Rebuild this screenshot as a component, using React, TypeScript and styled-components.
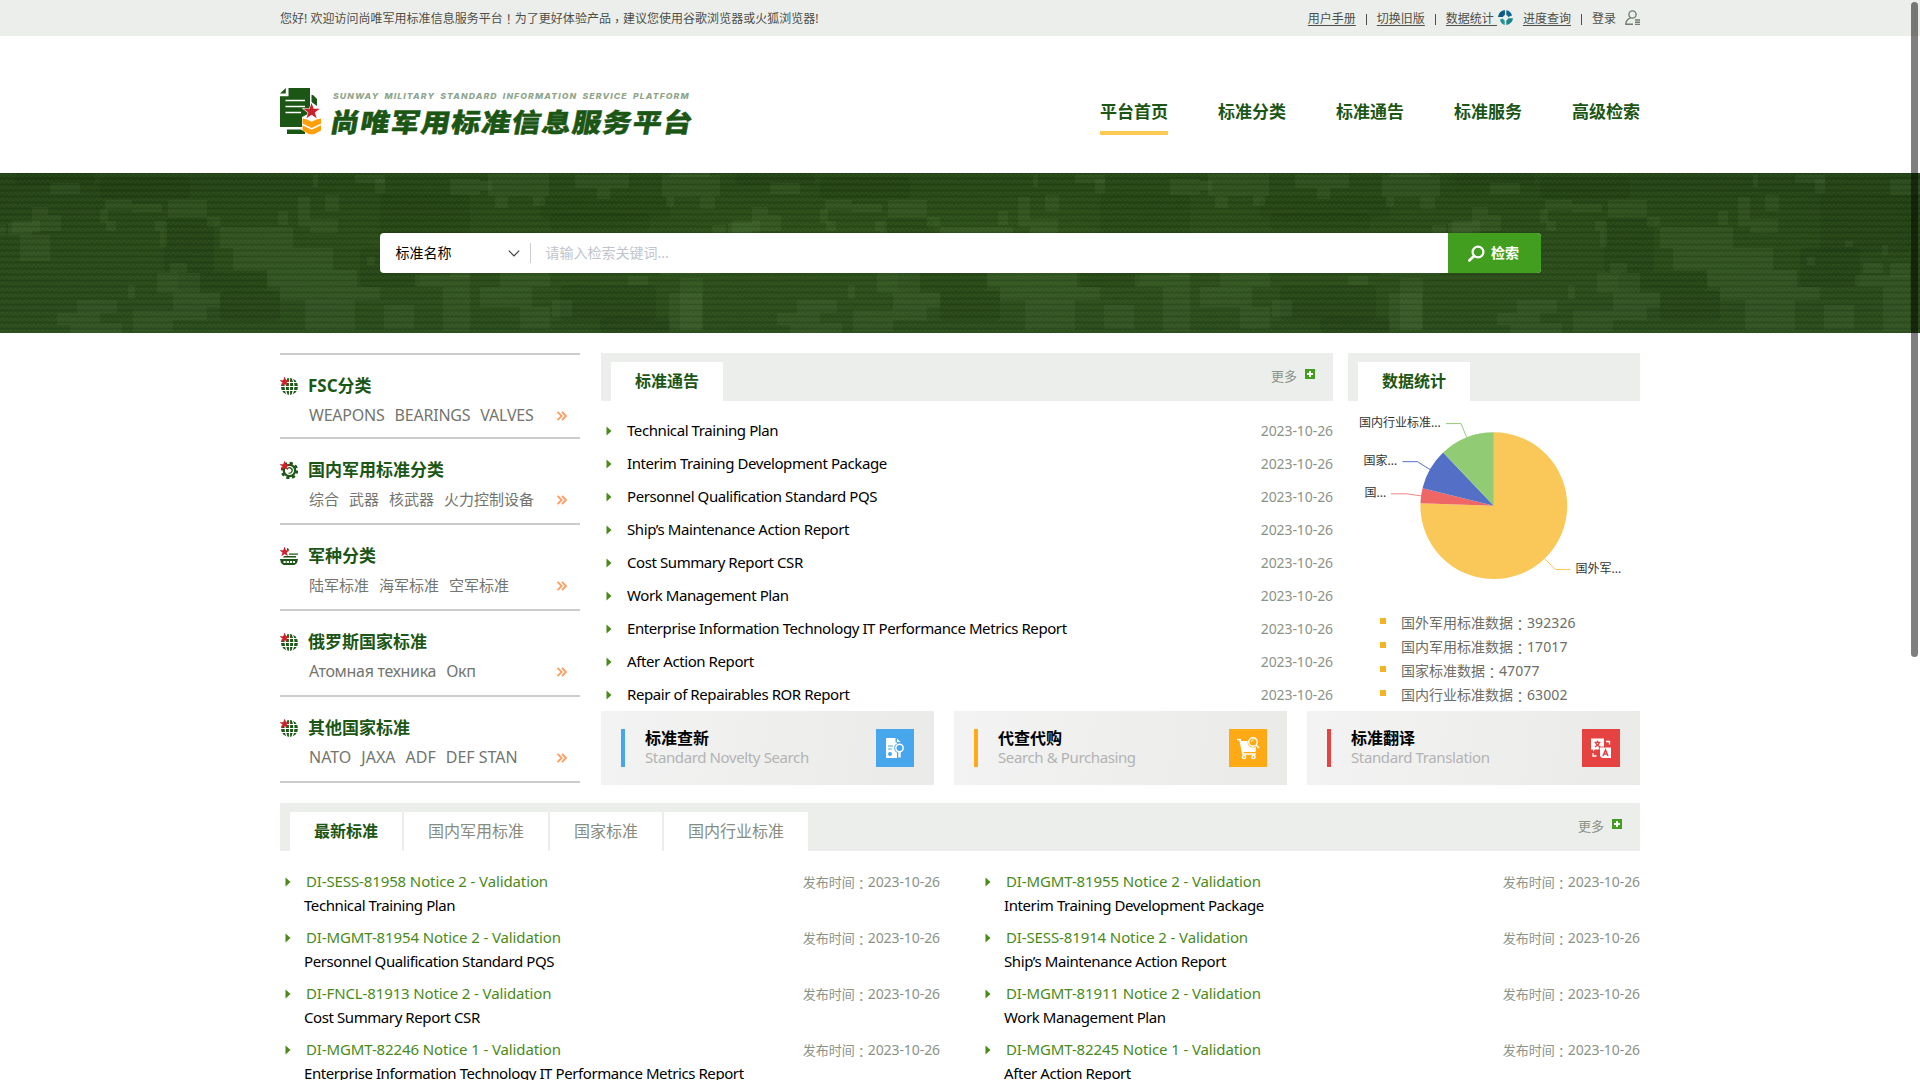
import React from "react";
import styled, { createGlobalStyle, css } from "styled-components";

const GlobalStyle = createGlobalStyle`
  * { box-sizing: border-box; }
  html, body { margin: 0; padding: 0; background: #fff; }
  body {
    font-family: "Noto Sans", "Noto Sans CJK SC", sans-serif;
    font-size: 14px;
    color: #000;
  }
  a { color: inherit; text-decoration: none; }
  ul { list-style: none; margin: 0; padding: 0; }
`;

const green = "#1b5615";
const panelGrey = "#eceeeb";

const Page = styled.div`
  width: 100%;
  height: 1080px;
  overflow: hidden;
  position: relative;
`;

const Container = styled.div`
  width: 1360px;
  margin: 0 auto;
`;

const Punct = styled.span<{ $drop?: number }>`
  display: inline-block;
  font-family: "Noto Sans CJK TC", sans-serif;
  line-height: 1;
  transform: translateY(${(p) => p.$drop ?? 1}px);
`;

/* ---------- top bar ---------- */

const TopBar = styled.div`
  height: 36px;
  background: ${panelGrey};
  color: #4c4e48;
  font-size: 12px;
`;

const TopInner = styled(Container)`
  height: 36px;
  display: flex;
  align-items: center;
  justify-content: space-between;
  line-height: 18px;
  padding-top: 2px;
`;

const Greeting = styled.span`
  white-space: nowrap;
  letter-spacing: 0.02px;
`;

const TopLinks = styled.div`
  display: flex;
  align-items: center;
`;

const TopLink = styled.a<{ $plain?: boolean }>`
  display: inline-flex;
  text-decoration: ${(p) => (p.$plain ? "none" : "underline")};
  text-underline-offset: 2px;
  white-space: pre;
`;

const Divider = styled.i`
  width: 1px;
  height: 11px;
  background: #4c4e48;
  margin: 0 10px;
`;

/* ---------- header ---------- */

const Header = styled(Container)`
  height: 137px;
  display: flex;
  justify-content: space-between;
`;

const Brand = styled.div`
  display: flex;
  padding-top: 52px;
`;

const BrandText = styled.div`
  margin-left: 9px;
  padding-top: 1px;
`;

const BrandEn = styled.div`
  font: italic 800 8px/14px Inter, sans-serif;
  color: #8ea58b;
  letter-spacing: 1.02px;
  word-spacing: 2px;
  white-space: nowrap;
  transform: scaleX(1.083);
  transform-origin: 0 0;
  margin-left: 2px;
`;

const BrandCn = styled.div`
  font: 900 29px/32px "Noto Sans CJK SC", sans-serif;
  letter-spacing: 1.25px;
  color: ${green};
  transform: skewX(-10deg) scaleY(0.9);
  white-space: nowrap;
  margin-top: 1px;
  -webkit-text-stroke: 0.5px ${green};
`;

const Nav = styled.nav`
  display: flex;
  gap: 50px;
  padding-top: 60px;
`;

const NavItem = styled.a<{ $active?: boolean }>`
  height: 39px;
  font-size: 17px;
  font-weight: 700;
  line-height: 31px;
  color: ${green};
  border-bottom: 4px solid ${(p) => (p.$active ? "#ffca52" : "transparent")};
`;

/* ---------- search banner ---------- */

const Banner = styled.div`
  height: 160px;
  position: relative;
  display: flex;
  align-items: center;
  justify-content: center;
`;

const Camo = styled.svg`
  position: absolute;
  inset: 0;
  width: 100%;
  height: 100%;
`;

const SearchBox = styled.div`
  position: relative;
  width: 1161px;
  height: 40px;
  display: flex;
  align-items: center;
  background: #fff;
  border-radius: 4px;
  overflow: hidden;
  line-height: 20px;
`;

const SearchType = styled.div`
  width: 151px;
  height: 20px;
  padding: 0 10px 0 16px;
  display: flex;
  align-items: center;
  justify-content: space-between;
  border-right: 1px solid #c9ccd0;
`;

const Placeholder = styled.span`
  flex: 1;
  padding-left: 15px;
  color: #c0c4cc;
`;

const SearchButton = styled.button`
  width: 93px;
  height: 40px;
  border: 0;
  padding: 0 1px 0 0;
  display: flex;
  align-items: center;
  justify-content: center;
  gap: 6px;
  color: #fff;
  background: #419e1e;
  font: 700 14px/20px "Noto Sans", "Noto Sans CJK SC", sans-serif;
`;

/* ---------- main area ---------- */

const Main = styled(Container)`
  display: flex;
  gap: 21px;
  padding-top: 20px;
`;

const Sidebar = styled.ul`
  width: 300px;
  border-top: 2px solid #cbcbcb;
`;

const Category = styled.li<{ $short?: boolean }>`
  height: ${(p) => (p.$short ? 84 : 86)}px;
  border-bottom: 2px solid #cbcbcb;
  padding-top: 18px;
`;

const CategoryTitle = styled.div`
  display: flex;
  align-items: center;
  gap: 10px;
  height: 26px;
  font-size: 17px;
  font-weight: 700;
  line-height: 26px;
  color: ${green};
  svg { margin-top: -1px; }
`;

const CategoryLinks = styled.div`
  display: flex;
  align-items: center;
  height: 24px;
  margin-top: 4px;
  padding: 0 13px 0 29px;
  line-height: 24px;
  color: #73756e;
  white-space: nowrap;
  svg { margin: 2px 0 0 auto; }
`;

const SubLink = styled.a<{ $size: number; $tight: number }>`
  margin-right: 10px;
  font-size: ${(p) => p.$size}px;
  letter-spacing: ${(p) => p.$tight}px;
`;

const Right = styled.div`
  flex: 1;
`;

const Panels = styled.div`
  display: flex;
  gap: 15px;
  height: 358px;
`;

const Panel = styled.section<{ $w: number }>`
  width: ${(p) => p.$w}px;
`;

const PanelHead = styled.div`
  height: 48px;
  padding: 9px 0 0 10px;
  background: ${panelGrey};
  display: flex;
  gap: 2px;
`;

const Tab = styled.div<{ $active?: boolean }>`
  height: 39px;
  padding: 0 24px;
  background: #fff;
  font-size: 16px;
  line-height: 39px;
  color: #858d82;
  ${(p) =>
    p.$active &&
    css`
      color: ${green};
      font-weight: 700;
    `}
`;

const More = styled.a<{ $right: number }>`
  display: flex;
  gap: 8px;
  margin-left: auto;
  padding-right: ${(p) => p.$right}px;
  height: 28px;
  font-size: 13px;
  line-height: 28px;
  color: #8b9387;
  svg { margin-top: 7px; }
`;

const NoticeList = styled.ul`
  padding-top: 14px;
`;

const Notice = styled.li`
  height: 33px;
  display: flex;
  align-items: center;
  padding-left: 5px;
  line-height: 20px;
  svg { margin: -1px 15px 0 0; }
`;

const NoticeTitle = styled.span`
  flex: 1;
  font-size: 15px;
  letter-spacing: -0.416px;
  margin-top: -4px;
`;

const DateText = styled.span<{ $lift: number }>`
  display: flex;
  align-items: center;
  font-size: 13px;
  line-height: 20px;
  color: #8b9387;
  margin-top: -${(p) => p.$lift}px;
`;

const DateValue = styled.span`
  font-size: 14px;
  letter-spacing: -0.08px;
`;

const Chart = styled.svg`
  display: block;
  width: 292px;
  height: 210px;
  font: 12px "Noto Sans", "Noto Sans CJK SC", sans-serif;
  fill: #333;
`;

const Legend = styled.ul`
  padding-left: 32px;
`;

const LegendItem = styled.li`
  height: 24px;
  display: flex;
  align-items: center;
  line-height: 20px;
  color: #6c6e67;
  &::before {
    content: "";
    width: 6px;
    height: 6px;
    margin: -4px 15px 0 0;
    background: #f6b424;
  }
`;

const LegendValue = styled.span`
  letter-spacing: 0.1px;
`;

const Services = styled.div`
  display: flex;
  gap: 20px;
`;

const Service = styled.a`
  width: 333px;
  height: 74px;
  padding: 0 20px;
  display: flex;
  align-items: center;
  background: linear-gradient(100deg, #f3f3f3, #eaeae8);
`;

const ServiceBar = styled.i<{ $c: string }>`
  width: 4px;
  height: 38px;
  background: ${(p) => p.$c};
`;

const ServiceText = styled.div`
  flex: 1;
  margin: -1px 0 0 20px;
`;

const ServiceTitle = styled.div`
  font-size: 16px;
  font-weight: 700;
  line-height: 20px;
`;

const ServiceSub = styled.div`
  font-size: 15px;
  line-height: 19px;
  letter-spacing: -0.38px;
  color: #b3b3b3;
`;

const ServiceIcon = styled.div<{ $c: string }>`
  width: 38px;
  height: 38px;
  background: ${(p) => p.$c};
`;

/* ---------- latest standards ---------- */

const Latest = styled(Container)`
  padding-top: 18px;
`;

const StandardGrid = styled.ul`
  display: grid;
  grid-template-columns: 660px 660px;
  column-gap: 40px;
  padding-top: 19px;
`;

const Standard = styled.li`
  height: 56px;
  padding-left: 5px;
`;

const StandardTop = styled.div`
  display: flex;
  align-items: center;
  height: 24px;
  svg { margin-right: 15px; }
`;

const Code = styled.span`
  flex: 1;
  font-size: 15px;
  letter-spacing: -0.12px;
  color: #4a8a19;
  line-height: 24px;
  margin-top: -3px;
`;

const StandardName = styled.div`
  padding-left: 19px;
  font-size: 15px;
  letter-spacing: -0.416px;
  line-height: 23px;
`;

const ScrollThumb = styled.div`
  position: absolute;
  right: 2px;
  top: 2px;
  width: 7px;
  height: 655px;
  border-radius: 4px;
  background: rgba(0, 0, 0, 0.5);
`;

/* ---------- drawings ---------- */

const STAR = "M0-5 1.2-1.6 4.8-1.6 1.9.6 3 4 0 1.9-3 4-1.9.6-4.8-1.6-1.2-1.6Z";

const LogoMark = () => (
  <svg width="42" height="47" viewBox="0 0 42 47">
    <path fill={green} d="M8.500 0H30V25L22 29V39H0V8.200H8.500ZM0 5.500 5.800 0V5.500ZM31.500 7 33 7 37 11V18L31.500 14ZM7 41.500H21L25 44V46H7Z" />
    <path stroke="#fff" strokeWidth="1.700" d="M5.500 12.500H25M5.500 18.500H25M5.500 24.500H21" fill="none" />
    <path d={STAR} transform="translate(31.600 23.500) scale(2.050)" fill="#fff" />
    <path d={STAR} transform="translate(31.600 23.500) scale(1.700)" fill="#c8232c" />
    <path
      fill="#ff9f0a"
      d="M22.500 30.500 27 31.500 31.600 33.800 36.200 31.500 41 30.500V35.500L31.600 40 22.500 35.500ZM22.500 37.300 31.600 41.700 41 37.300V42.500L34 46.300H29.200L22.500 42.500Z"
    />
  </svg>
);

const StatIcon = () => (
  <svg width="15" height="15" viewBox="0 0 15 15" style={{ marginLeft: 1, marginRight: 10, marginTop: -3 }}>
    <path d="M6.900 0V5A3 3 0 0 0 5 7.100H0A7.500 7.500 0 0 1 6.900 0Z" fill="#0c5a86" />
    <path d="M8.300 .2A7 7 0 0 1 14 5.500L10.200 6.900A3 3 0 0 0 8.300 5Z" fill="#0f6690" />
    <path d="M15 8.200A7.500 7.500 0 0 1 8.300 15V10.400A3 3 0 0 0 10.200 8.200Z" fill="#19868c" />
    <path d="M2 9.400 5 8.400A3 3 0 0 0 6.700 10.400V15A7 7 0 0 1 2 9.400Z" fill="#22959a" />
  </svg>
);

const UserIcon = () => (
  <svg width="15" height="16" viewBox="0 0 15 16" fill="none" stroke="#6f7f70" strokeWidth="1.400" style={{ marginLeft: 9, marginTop: -3 }}>
    <circle cx="7.500" cy="4.500" r="3.600" />
    <path d="M5.500 7.800C2.500 9 .8 11 .8 14.300H8M10 10H15M10 12.200H15M10 14.400H15" />
  </svg>
);

const Bullet = () => (
  <svg width="6" height="10" viewBox="0 0 6 10">
    <path d="M.5.500 5.500 5 .5 9.500Z" fill="#4a8a19" />
  </svg>
);

const PlusIcon = () => (
  <svg width="10" height="10" viewBox="0 0 10 10">
    <path fill="#419e1e" d="M0 0H10V10H0Z" />
    <path stroke="#fff" strokeWidth="2" d="M5 2V8M2 5H8" />
  </svg>
);

const DoubleArrow = () => (
  <svg width="10" height="10" viewBox="0 0 10 10" fill="none" stroke="#ff9d63" strokeWidth="1.900">
    <path d="M.6.800 4.600 5 .6 9.200M5 .8 9 5 5 9.200" />
  </svg>
);

const GlobeIcon = () => (
  <svg width="18" height="18" viewBox="0 0 18 18">
    <circle cx="9.500" cy="9.500" r="8.500" fill={green} />
    <path stroke="#fff" strokeWidth="1.200" fill="none" d="M0 5.500H18M0 9.500H18M0 13.500H18M9.500 0V18M7 0C4.500 6 4.500 12 7 18M12 0C14.500 6 14.500 12 12 18" />
    <path d={STAR} transform="translate(4.600 4.900) scale(1.100)" fill="#d0202a" />
  </svg>
);

const GearIcon = () => (
  <svg width="18" height="18" viewBox="0 0 18 18">
    <circle cx="9.500" cy="9.500" r="7.500" fill="none" stroke={green} strokeWidth="2.400" strokeDasharray="3.200 2.690" />
    <circle cx="9.500" cy="9.500" r="5.700" fill="none" stroke={green} strokeWidth="2.200" />
    <path d="M7.200 8A2.700 2.700 0 1 1 8.500 12" fill="none" stroke={green} strokeWidth="1.200" />
    <path d={STAR} transform="translate(4.600 4.900) scale(1.100)" fill="#d0202a" />
  </svg>
);

const TankIcon = () => (
  <svg width="18" height="18" viewBox="0 0 18 18">
    <path fill={green} d="M7 1 9 2 8 4 7 3ZM9 6.500H18V7.800H9ZM4 9H16V10.500H3ZM0 12H18L17 16 14.500 18H3.500L1 16Z" />
    <path d="M3.500 15H15" stroke="#fff" strokeWidth="2" strokeDasharray="2.200 1" />
    <path d={STAR} transform="translate(4.600 4.900) scale(1.100)" fill="#d0202a" />
  </svg>
);

const NoveltyIcon = () => (
  <svg width="38" height="38" viewBox="0 0 38 38">
    <path fill="#fff" d="M10 9H19.500V13.500H21V29H10ZM21 9.500 24.500 13H21Z" />
    <path stroke="#48a7ec" strokeWidth="1.200" d="M12 17H17M12 20H16" />
    <circle cx="14" cy="25" r="2" fill="#48a7ec" />
    <circle cx="23.500" cy="19" r="5.300" fill="#48a7ec" />
    <circle cx="23.500" cy="19" r="3.700" fill="none" stroke="#fff" strokeWidth="1.500" />
    <path d="M22.300 23V29L23.500 28 24.700 29V23" fill="#fff" />
  </svg>
);

const CartIcon = () => (
  <svg width="38" height="38" viewBox="0 0 38 38">
    <path fill="#fff" d="M11 12H27.500L26.500 23H13.500Z" />
    <path fill="none" stroke="#fff" strokeWidth="1.600" d="M8 10.500H11L14 25H27" />
    <circle cx="15" cy="28" r="1.600" fill="none" stroke="#fff" strokeWidth="1.400" />
    <circle cx="24.500" cy="28" r="1.600" fill="none" stroke="#fff" strokeWidth="1.400" />
    <circle cx="24" cy="13" r="5.500" fill="#ffa914" />
    <circle cx="24" cy="13" r="4.200" fill="none" stroke="#fff" strokeWidth="1.400" />
    <path d="M27 16 30 19" stroke="#fff" strokeWidth="1.600" />
    <path d="M22.500 13A1.800 1.800 0 0 1 24.500 11" stroke="#fff" fill="none" />
  </svg>
);

const TranslateIcon = () => (
  <svg width="38" height="38" viewBox="0 0 38 38">
    <path fill="#fff" d="M9 9.500H22V20.500H13L11 22.500V20.500H9ZM18 18.500H29V29H20L18 27Z" />
    <path stroke="#e64242" strokeWidth="1.300" fill="none" d="M12.500 13.300H18.500M15.500 11.500V13M17.500 13.300C17 15.500 15 17 12.800 17.800M13.500 13.300C14 15.500 16 17 18.200 17.800" />
    <path stroke="#e64242" strokeWidth=".9" fill="none" d="M17.300 29V18H22.500" />
    <path stroke="#e64242" strokeWidth="1.500" fill="none" d="M21 27 23.500 21 26 27M22 25H25" />
    <path stroke="#fff" strokeWidth="1.300" fill="none" d="M24 12.500H27.500V15.500M11 24V27H14.500" />
  </svg>
);

/* light camouflage patches inside one 720px tile: x, y, width, height */
const PATCHES: number[][] = [
  [8, 1, 61, 22], [15, 23, 13, 12], [53, 23, 12, 10], [0, 8, 12, 10], [95, 2, 54, 13], [117, 15, 13, 11],
  [182, 2, 58, 22], [186, 24, 8, 10], [220, 24, 15, 12], [190, 0, 40, 4], [252, 47, 28, 13], [232, 52, 14, 10],
  [290, 10, 30, 11], [272, 34, 16, 24], [288, 42, 13, 16], [248, 50, 24, 12], [345, 27, 27, 10], [340, 36, 8, 14],
  [346, 48, 10, 10], [372, 31, 30, 8], [408, 27, 39, 17], [395, 48, 12, 10], [400, 58, 7, 16], [447, 44, 13, 10],
  [460, 54, 73, 21], [473, 75, 100, 22], [507, 97, 90, 17], [520, 114, 100, 13], [545, 127, 50, 30],
  [538, 24, 12, 30], [550, 46, 28, 14], [565, 22, 14, 16], [518, 38, 10, 14], [553, 2, 5, 12],
  [397, 100, 43, 20], [413, 120, 47, 14], [413, 134, 34, 13], [373, 137, 40, 21], [317, 127, 40, 13],
  [297, 140, 43, 12], [310, 152, 30, 8], [340, 150, 22, 10], [200, 105, 23, 52], [410, 90, 17, 10], [368, 112, 7, 14],
  [663, 90, 20, 10], [690, 90, 20, 14], [655, 102, 55, 12], [683, 114, 27, 44], [615, 6, 10, 14], [595, 2, 30, 8],
  [645, 68, 8, 6], [682, 72, 6, 10], [607, 84, 8, 8], [189, 120, 33, 37], [72, 127, 20, 17], [148, 103, 20, 9],
  [0, 60, 25, 40], [20, 90, 50, 24], [0, 114, 52, 20], [40, 134, 30, 22], [100, 60, 70, 24], [180, 82, 60, 20],
  [260, 62, 30, 26], [624, 132, 30, 24], [690, 6, 30, 16],
];
const DARKS: number[][] = [
  [80, 112, 96, 36], [60, 24, 130, 22], [340, 4, 90, 22], [404, 46, 50, 54], [418, 98, 90, 20], [460, 118, 60, 30],
  [620, 20, 90, 60], [255, 0, 80, 12], [600, 74, 60, 40], [120, 144, 70, 16], [70, 40, 100, 18],
];

const Camouflage = () => (
  <Camo>
    <defs>
      <linearGradient id="shade" x1="0" y1="0" x2="0" y2="1">
        <stop offset="0" stopColor="#264416" />
        <stop offset="1" stopColor="#30501f" />
      </linearGradient>
      <pattern id="patches" x="480" width="720" height="160" patternUnits="userSpaceOnUse">
        {DARKS.map(([x, y, w, h]) => (
          <rect key={`d${x}-${y}`} x={x} y={y} width={w} height={h} rx="5" fill="#142d08" opacity=".2" />
        ))}
        {PATCHES.map(([x, y, w, h]) => (
          <rect key={`l${x}-${y}`} x={x} y={y} width={w} height={h} rx="1" fill="#6a8a58" opacity=".15" />
        ))}
      </pattern>
      <pattern id="weave" width="9" height="12" patternUnits="userSpaceOnUse">
        <path d="M0 4 2.250 1 4.500 4 6.750 1 9 4M0 10 2.250 7 4.500 10 6.750 7 9 10" fill="none" stroke="#6f9a4c" strokeWidth=".7" opacity=".24" />
        <path d="M0 5.500H9M0 11.500H9" stroke="#102507" opacity=".18" />
      </pattern>
      <radialGradient id="glow" cx=".5" cy=".4" r=".6">
        <stop offset="0" stopColor="#3f7a16" stopOpacity=".12" />
        <stop offset="1" stopColor="#0b2a0a" stopOpacity=".14" />
      </radialGradient>
    </defs>
    <rect width="100%" height="160" fill="url(#shade)" />
    <rect width="100%" height="160" fill="url(#patches)" />
    <rect width="100%" height="160" fill="url(#weave)" />
    <rect width="100%" height="160" fill="url(#glow)" />
  </Camo>
);

const SLICES = [
  { value: 392326, color: "#fac858" },
  { value: 17017, color: "#ee6666" },
  { value: 47077, color: "#5470c6" },
  { value: 63002, color: "#91cc75" },
];

const PieChart = () => {
  const cx = 145.8;
  const cy = 104.7;
  const r = 73.4;
  const total = SLICES.reduce((sum, s) => sum + s.value, 0);
  let angle = -Math.PI / 2;
  const point = (a: number) => `${cx + r * Math.cos(a)} ${cy + r * Math.sin(a)}`;
  return (
    <Chart viewBox="0 0 292 210">
      {SLICES.map((s) => {
        const start = angle;
        angle += (s.value / total) * Math.PI * 2;
        const large = angle - start > Math.PI ? 1 : 0;
        return <path key={s.color} fill={s.color} d={`M${cx} ${cy}L${point(start)}A${r} ${r} 0 ${large} 1 ${point(angle)}Z`} />;
      })}
      <g fill="none">
        <path stroke="#91cc75" d="M98 22.600H113L118.700 36.500" />
        <path stroke="#5470c6" d="M54.500 60.700H69.500L82 68.500" />
        <path stroke="#ee6666" opacity=".8" d="M43 92.800H58L73 94.800" />
        <path stroke="#fac858" d="M197 158 207.500 168.500H222.500" />
      </g>
      <text x="11" y="26">国内行业标准...</text>
      <text x="15.500" y="64">国家...</text>
      <text x="16.500" y="96">国...</text>
      <text x="227.500" y="172">国外军...</text>
    </Chart>
  );
};

/* ---------- content ---------- */

const CATEGORIES = [
  { title: "FSC分类", icon: GlobeIcon, links: ["WEAPONS", "BEARINGS", "VALVES"], size: 16, tight: -0.22 },
  { title: "国内军用标准分类", icon: GearIcon, links: ["综合", "武器", "核武器", "火力控制设备"], size: 15, tight: 0 },
  { title: "军种分类", icon: TankIcon, links: ["陆军标准", "海军标准", "空军标准"], size: 15, tight: 0 },
  { title: "俄罗斯国家标准", icon: GlobeIcon, links: ["Атомная техника", "Окп"], size: 16, tight: -0.3 },
  { title: "其他国家标准", icon: GlobeIcon, links: ["NATO", "JAXA", "ADF", "DEF STAN"], size: 16, tight: 0 },
];

const NOTICES = [
  "Technical Training Plan",
  "Interim Training Development Package",
  "Personnel Qualification Standard PQS",
  "Ship’s Maintenance Action Report",
  "Cost Summary Report CSR",
  "Work Management Plan",
  "Enterprise Information Technology IT Performance Metrics Report",
  "After Action Report",
  "Repair of Repairables ROR Report",
];

const CODES = [
  "DI-SESS-81958 Notice 2 - Validation",
  "DI-MGMT-81955 Notice 2 - Validation",
  "DI-MGMT-81954 Notice 2 - Validation",
  "DI-SESS-81914 Notice 2 - Validation",
  "DI-FNCL-81913 Notice 2 - Validation",
  "DI-MGMT-81911 Notice 2 - Validation",
  "DI-MGMT-82246 Notice 1 - Validation",
  "DI-MGMT-82245 Notice 1 - Validation",
];

const LEGEND = [
  ["国外军用标准数据", "392326"],
  ["国内军用标准数据", "17017"],
  ["国家标准数据", "47077"],
  ["国内行业标准数据", "63002"],
];

const SERVICES = [
  { title: "标准查新", sub: "Standard Novelty Search", color: "#48a7ec", icon: NoveltyIcon },
  { title: "代查代购", sub: "Search & Purchasing", color: "#ffa914", icon: CartIcon },
  { title: "标准翻译", sub: "Standard Translation", color: "#e64242", icon: TranslateIcon },
];

const NAV = ["平台首页", "标准分类", "标准通告", "标准服务", "高级检索"];
const TABS = ["最新标准", "国内军用标准", "国家标准", "国内行业标准"];
const DATE = "2023-10-26";

export default function App() {
  return (
    <Page>
      <GlobalStyle />
      <TopBar>
        <TopInner>
          <Greeting>
            您好! 欢迎访问尚唯军用标准信息服务平台<Punct>！</Punct>为了更好体验产品<Punct $drop={3}>，</Punct>建议您使用谷歌浏览器或火狐浏览器!
          </Greeting>
          <TopLinks>
            <TopLink>用户手册</TopLink>
            <Divider />
            <TopLink>切换旧版</TopLink>
            <Divider />
            <TopLink>数据统计 </TopLink>
            <StatIcon />
            <TopLink>进度查询</TopLink>
            <Divider />
            <TopLink $plain>登录</TopLink>
            <UserIcon />
          </TopLinks>
        </TopInner>
      </TopBar>

      <Header>
        <Brand>
          <LogoMark />
          <BrandText>
            <BrandEn>SUNWAY MILITARY STANDARD INFORMATION SERVICE PLATFORM</BrandEn>
            <BrandCn>尚唯军用标准信息服务平台</BrandCn>
          </BrandText>
        </Brand>
        <Nav>
          {NAV.map((n, i) => (
            <NavItem key={n} $active={i === 0}>{n}</NavItem>
          ))}
        </Nav>
      </Header>

      <Banner>
        <Camouflage />
        <SearchBox>
          <SearchType>
            标准名称
            <svg width="12" height="7" viewBox="0 0 12 7" fill="none" stroke="#444" strokeWidth="1.200">
              <path d="M.8.700 6 6 11.200.700" />
            </svg>
          </SearchType>
          <Placeholder>请输入检索关键词...</Placeholder>
          <SearchButton>
            <svg width="17" height="17" viewBox="0 0 17 17" fill="none" stroke="#fff">
              <circle cx="10" cy="7" r="5.400" strokeWidth="2.200" />
              <path d="M6 11 1.300 15.500" strokeWidth="2.600" strokeLinecap="round" />
            </svg>
            检索
          </SearchButton>
        </SearchBox>
      </Banner>

      <Main>
        <Sidebar>
          {CATEGORIES.map((c, i) => (
            <Category key={c.title} $short={i === 0}>
              <CategoryTitle>
                <c.icon />
                {c.title}
              </CategoryTitle>
              <CategoryLinks>
                {c.links.map((l) => (
                  <SubLink key={l} $size={c.size} $tight={c.tight}>{l}</SubLink>
                ))}
                <DoubleArrow />
              </CategoryLinks>
            </Category>
          ))}
        </Sidebar>

        <Right>
          <Panels>
            <Panel $w={732}>
              <PanelHead>
                <Tab $active>标准通告</Tab>
                <More $right={18}>更多<PlusIcon /></More>
              </PanelHead>
              <NoticeList>
                {NOTICES.map((n) => (
                  <Notice key={n}>
                    <Bullet />
                    <NoticeTitle>{n}</NoticeTitle>
                    <DateText $lift={2}>
                      <DateValue>{DATE}</DateValue>
                    </DateText>
                  </Notice>
                ))}
              </NoticeList>
            </Panel>
            <Panel $w={292}>
              <PanelHead>
                <Tab $active>数据统计</Tab>
              </PanelHead>
              <PieChart />
              <Legend>
                {LEGEND.map(([label, value]) => (
                  <LegendItem key={label}>
                    {label}<Punct>：</Punct><LegendValue>{value}</LegendValue>
                  </LegendItem>
                ))}
              </Legend>
            </Panel>
          </Panels>
          <Services>
            {SERVICES.map((s) => (
              <Service key={s.title}>
                <ServiceBar $c={s.color} />
                <ServiceText>
                  <ServiceTitle>{s.title}</ServiceTitle>
                  <ServiceSub>{s.sub}</ServiceSub>
                </ServiceText>
                <ServiceIcon $c={s.color}><s.icon /></ServiceIcon>
              </Service>
            ))}
          </Services>
        </Right>
      </Main>

      <Latest>
        <PanelHead>
          {TABS.map((t, i) => (
            <Tab key={t} $active={i === 0}>{t}</Tab>
          ))}
          <More $right={18}>更多<PlusIcon /></More>
        </PanelHead>
        <StandardGrid>
          {CODES.map((code, i) => (
            <Standard key={code}>
              <StandardTop>
                <Bullet />
                <Code>{code}</Code>
                <DateText $lift={0}>
                  发布时间<Punct>：</Punct><DateValue>{DATE}</DateValue>
                </DateText>
              </StandardTop>
              <StandardName>{NOTICES[i]}</StandardName>
            </Standard>
          ))}
        </StandardGrid>
      </Latest>
      <ScrollThumb />
    </Page>
  );
}
